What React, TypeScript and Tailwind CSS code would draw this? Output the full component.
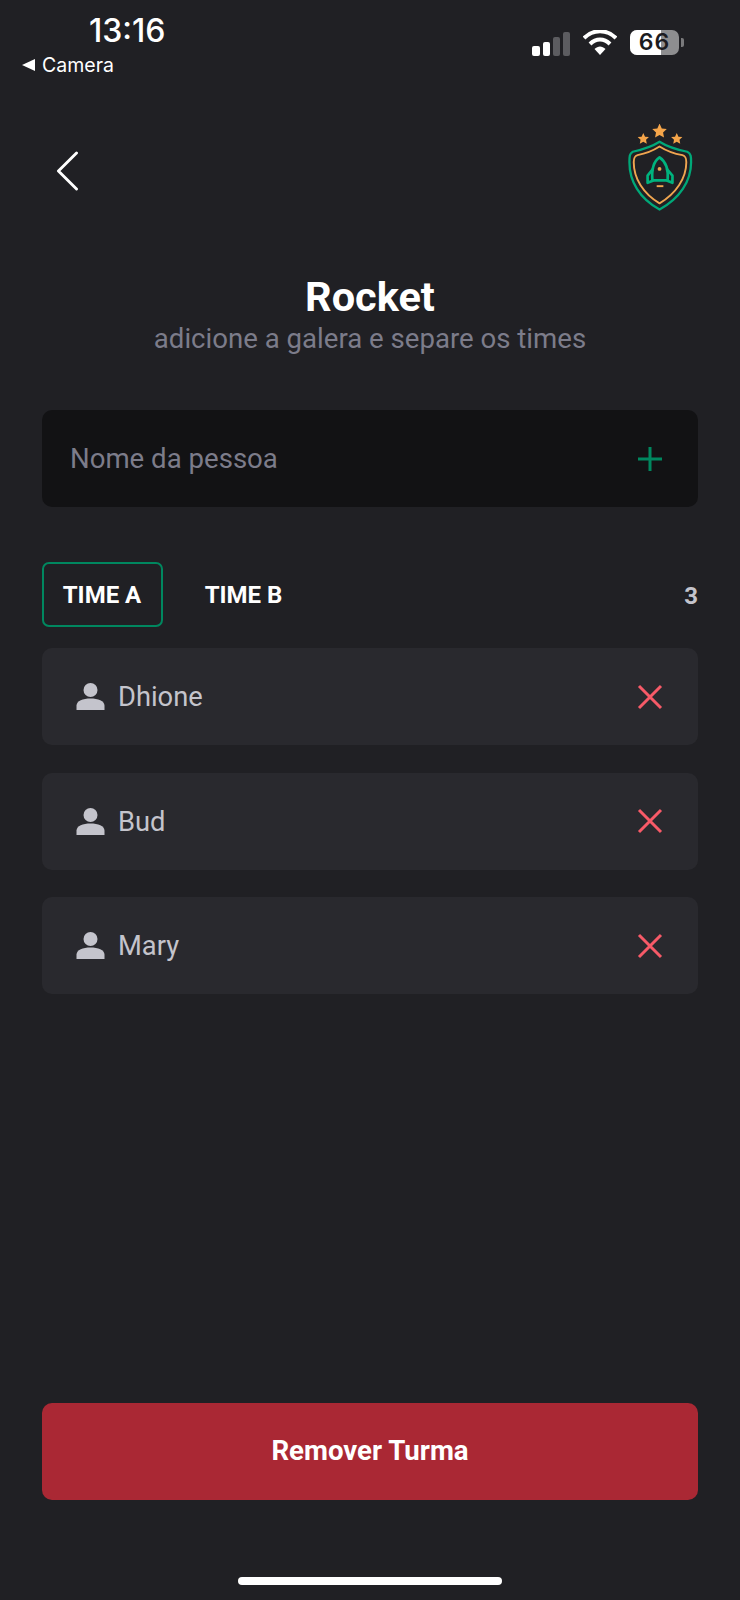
import React from 'react';

const PLAYERS = ['Dhione', 'Bud', 'Mary'];

const UserIcon = () => (
  <svg width="29" height="29" viewBox="0 0 29 29" fill="#C4C4CC">
    <circle cx="14.5" cy="8" r="7" />
    <path d="M0.5 28 V23.5 C0.5 19 7 16.5 14.5 16.5 C22 16.5 28.5 19 28.5 23.5 V28 Z" />
  </svg>
);

const STAR = 'M0 -10 L2.9 -3.6 L9.5 -3 L4.6 1.6 L5.9 8.4 L0 5 L-5.9 8.4 L-4.6 1.6 L-9.5 -3 L-2.9 -3.6 Z';

const Logo = () => (
  <svg width="65" height="88" viewBox="0 0 68 92" fill="none">
    <path d={STAR} transform="translate(33 7.5) scale(0.8)" fill="#F5A54A" />
    <path d={STAR} transform="translate(16 15.5) scale(0.62)" fill="#F5A54A" />
    <path d={STAR} transform="translate(51 15.5) scale(0.62)" fill="#F5A54A" />
    <path d="M33 18.5 C40 23 50 26.5 62 29 C66 31 66 34 66 40 C66 60 54 78 33 89.5 C12 78 1.5 60 1.5 40 C1.5 34 1.5 31 5 29 C16 26.5 26 23 33 18.5 Z" stroke="#00A878" strokeWidth="2.4" strokeLinejoin="round" />
    <path d="M33 23.5 C40 28 48 31 57 32.5 C60 33.5 61 35 61 40 C61 57 50 73 33 83 C16 73 6 57 6 40 C6 35 7 33.5 10 32.5 C18 31 26 28 33 23.5 Z" stroke="#F0A650" strokeWidth="2" strokeLinejoin="round" />
    <path d="M33 35 C39 39 42.5 47 41.5 59 H25.5 C24.5 47 27 39 33 35 Z" stroke="#00B37E" strokeWidth="2.8" strokeLinejoin="round" />
    <path d="M26 47 L20.5 54 V61.5 L26.5 59 M40.5 47 L46.5 54 V61.5 L40.5 59" stroke="#00B37E" strokeWidth="2.8" strokeLinejoin="round" />
    <circle cx="33" cy="47" r="2" fill="#F0A650" />
    <path d="M30 65 H37" stroke="#F0A650" strokeWidth="2" />
  </svg>
);

const StatusBar = () => (
  <div className="h-[83px] flex justify-between text-white" style={{ fontFamily: 'Inter, sans-serif' }}>
    <div className="w-[128px] ml-[21px] pt-[13px]">
      <div className="text-[32px] leading-[36px] font-medium ml-[68px] whitespace-nowrap">13:16</div>
      <div className="flex items-center gap-[7px] mt-[4px] ml-[1px] text-[19.5px] leading-[24px]">
        <svg width="13" height="12" viewBox="0 0 13 12"><path d="M0 6 L13 0 V12 Z" fill="#fff" /></svg>
        Camera
      </div>
    </div>
    <div className="flex items-start gap-[12px] pt-[30px] mr-[56px]">
      <div className="flex items-end gap-[3px] h-[25px] mt-[1px]">
        <div className="w-[8px] h-[10px] rounded-[2px] bg-white" />
        <div className="w-[7px] h-[14px] rounded-[2px] bg-white" />
        <div className="w-[7px] h-[19px] rounded-[2px] bg-[#5c5c60]" />
        <div className="w-[7px] h-[24px] rounded-[2px] bg-[#5c5c60]" />
      </div>
      <svg width="34" height="25" viewBox="0 0 34 25" className="ml-[1px]">
        <path d="M1 8 C10 -1 24 -1 33 8" stroke="#fff" strokeWidth="4" fill="none" />
        <path d="M7 14 C13 8 21 8 27 14" stroke="#fff" strokeWidth="4" fill="none" />
        <path d="M11.5 19 C15 15.5 19 15.5 22.5 19 L17 25 Z" fill="#fff" />
      </svg>
      <div className="flex items-center ml-[1px]">
        <div className="relative w-[49px] h-[25px] rounded-[7px] bg-[#8e8e90] flex">
          <div className="w-[31px] bg-white rounded-l-[7px]" />
          <div className="absolute inset-0 flex items-center justify-center text-[#1c1c1f] text-[23px] leading-[25px] font-semibold tracking-[1px]">66</div>
        </div>
        <div className="w-[3px] h-[9px] ml-[2px] rounded-r-[2px] bg-[#7a7a7c]" />
      </div>
    </div>
  </div>
);

export default function App() {
  return (
    <div
      className="w-[740px] h-[1600px] bg-[#202024] flex flex-col overflow-hidden"
      style={{ fontFamily: 'Roboto, sans-serif' }}
    >
      <StatusBar />

      <header className="flex justify-between items-start h-[130px] pt-[41px] pl-[55px] pr-[47px]">
        <svg width="24" height="40" viewBox="0 0 24 42" className="mt-[27px]" fill="none">
          <path d="M22 2 L3 21 L22 40" stroke="#fff" strokeWidth="3" strokeLinecap="round" strokeLinejoin="round" />
        </svg>
        <Logo />
      </header>

      <div className="px-[42px] flex flex-col flex-1">
        <h1 className="text-[41.5px] leading-[50px] font-bold text-white text-center mt-[59px]">Rocket</h1>
        <p className="text-[27.6px] leading-[34px] text-[#7C7C8A] text-center">adicione a galera e separe os times</p>

        <div className="h-[97px] mt-[54px] rounded-[10px] bg-[#121214] flex items-center justify-between pl-[28px] pr-[35px]">
          <span className="text-[27.6px] text-[#7C7C8A]">Nome da pessoa</span>
          <svg width="26" height="26" viewBox="0 0 26 26"><path d="M13 1 V25 M1 13 H25" stroke="#00875F" strokeWidth="3" /></svg>
        </div>

        <div className="flex items-center mt-[55px] h-[65px]">
          <div className="w-[121px] h-[65px] pr-[1px] rounded-[7px] border-2 border-[#00875F] flex items-center justify-center text-[24px] font-bold text-white">TIME A</div>
          <div className="w-[121px] h-[65px] flex items-center justify-center text-[24px] font-bold text-white ml-[20px]">TIME B</div>
          <span className="ml-auto mt-[2px] text-[24px] font-bold text-[#C4C4CC]">3</span>
        </div>

        <div className="flex flex-col gap-[27.5px] mt-[21px]">
          {PLAYERS.map((name) => (
            <div key={name} className="h-[97px] rounded-[10px] bg-[#29292E] flex items-center pl-[34px] pr-[35px]">
              <UserIcon />
              <span className="text-[27.3px] leading-[32px] mt-[1px] text-[#C4C4CC] ml-[13px]">{name}</span>
              <svg width="26" height="26" viewBox="0 0 26 26" className="ml-auto">
                <path d="M2 2 L24 24 M24 2 L2 24" stroke="#F75A68" strokeWidth="3" />
              </svg>
            </div>
          ))}
        </div>

        <button className="mt-auto h-[97px] pb-[1px] rounded-[10px] bg-[#AA2834] text-white text-[27.6px] font-bold">
          Remover Turma
        </button>

        <div className="mx-auto mt-[77px] mb-[15px] w-[264px] h-[8px] rounded-full bg-white" />
      </div>
    </div>
  );
}
